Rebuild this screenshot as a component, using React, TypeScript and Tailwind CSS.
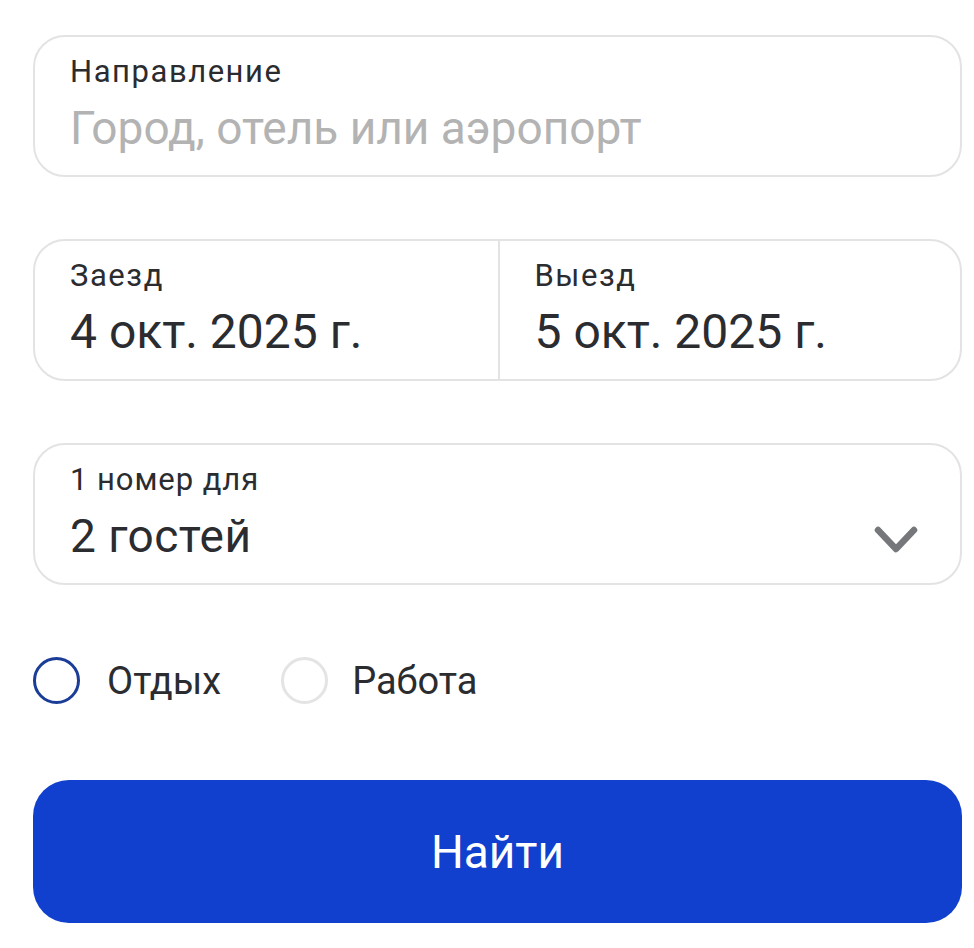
export default function App() {
  return (
    <div className="min-h-[948px] w-full bg-white pl-[33px] pr-[12px] pt-[35px] font-['Roboto',sans-serif] text-[#2b2c30]">
      {/* Destination */}
      <div className="flex h-[142px] flex-col justify-center gap-[12px] rounded-[32px] border-[2.5px] border-[#e3e3e3] px-[35px] pb-[2px]">
        <div className="text-[31px] leading-[34px] tracking-[0.05em]">Направление</div>
        <div className="text-[46px] leading-[54px] text-[#b3b3b3]">Город, отель или аэропорт</div>
      </div>

      {/* Dates */}
      <div className="mt-[62px] grid h-[142px] grid-cols-2 rounded-[32px] border-[2.5px] border-[#e3e3e3]">
        <div className="flex flex-col justify-center gap-[12px] px-[35px] pb-[2px]">
          <div className="text-[31px] leading-[34px] tracking-[0.05em]">Заезд</div>
          <div className="text-[48px] leading-[54px]">4 окт. 2025 г.</div>
        </div>
        <div className="flex flex-col justify-center gap-[12px] border-l-[2.5px] border-[#e3e3e3] px-[35px] pb-[2px]">
          <div className="text-[31px] leading-[34px] tracking-[0.05em]">Выезд</div>
          <div className="text-[48px] leading-[54px]">5 окт. 2025 г.</div>
        </div>
      </div>

      {/* Guests */}
      <div className="mt-[62px] flex h-[142px] items-center justify-between rounded-[32px] border-[2.5px] border-[#e3e3e3] pl-[35px] pr-[42px]">
        <div className="flex flex-col gap-[12px] pb-[2px]">
          <div className="text-[31px] leading-[34px] tracking-[0.03em]">1 номер для</div>
          <div className="text-[46px] leading-[54px] tracking-[0.01em]">2 гостей</div>
        </div>
        <svg width="44" height="28" viewBox="0 0 44 28" className="mt-[52px]">
          <polyline
            points="4,4 22,23 40,4"
            fill="none"
            stroke="#76777b"
            strokeWidth="6.5"
            strokeLinecap="round"
            strokeLinejoin="round"
          />
        </svg>
      </div>

      {/* Trip type */}
      <div className="mt-[72px] flex items-center">
        <span className="size-[47px] rounded-full border-[3px] border-[#1b3d97]" />
        <span className="ml-[27px] text-[38px] leading-[46px]">Отдых</span>
        <span className="ml-[60px] size-[47px] rounded-full border-[3px] border-[#e4e4e4]" />
        <span className="ml-[24px] text-[38px] leading-[46px]">Работа</span>
      </div>

      {/* Search */}
      <button className="mt-[76px] flex h-[143px] w-full items-center justify-center rounded-[36px] bg-[#1040cd] text-[46px] leading-[54px] text-white">
        Найти
      </button>
    </div>
  );
}
